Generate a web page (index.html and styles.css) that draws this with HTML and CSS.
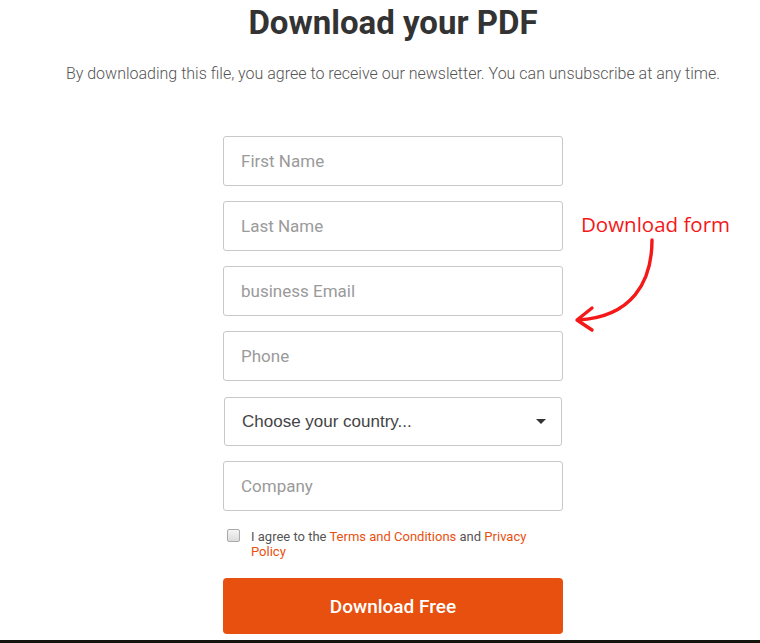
FILE: index.html
```html
<!DOCTYPE html>
<html>
<head>
<meta charset="utf-8"/>
<title>Download your PDF</title>
<link rel="stylesheet" href="styles.css">
</head>
<body>

<div class="page">
	<h1>Download your PDF</h1>
	<p class="lead">By downloading this file, you agree to receive our newsletter. You can unsubscribe at any time.</p>

	<form class="dlform">
		<input type="text" class="field" placeholder="First Name">
		<input type="text" class="field" placeholder="Last Name">
		<input type="text" class="field" placeholder="business Email">
		<input type="text" class="field" placeholder="Phone">
		<div class="selbox">
			<span>Choose your country...</span>
			<span class="caret"></span>
		</div>
		<input type="text" class="field" placeholder="Company">
		<label class="agree">
			<span class="chk"></span>
			<span class="agreetxt">I agree to the <a href="#">Terms and Conditions</a> and <a href="#">Privacy Policy</a></span>
		</label>
		<button type="button" class="dlbtn">Download Free</button>
	</form>

	<!-- annotation over the page -->
	<div class="note">
		<span>Download form</span>
		<svg width="100" height="110" viewBox="0 0 100 110">
			<path d="M80 8 C80 50 60 85 6 88" fill="none" stroke="#f41818" stroke-width="3.4" stroke-linecap="round"/>
			<path d="M20 76 L5 88 L20 98" fill="none" stroke="#f41818" stroke-width="3.4" stroke-linecap="round" stroke-linejoin="round"/>
		</svg>
	</div>
</div>
<div class="bottombar"></div>

</body>
</html>
```

FILE: styles.css
```css
body {
	margin: 0;
	background: #fff;
	font-family: Roboto, "Liberation Sans", sans-serif;
	color: #333;
}
.page {
	position: relative;
	height: 640px;
	padding-left: 26px;
	overflow: hidden;
}
h1 {
	margin: 0;
	padding-top: 3px;
	text-align: center;
	font-size: 33px;
	font-weight: 700;
	line-height: 40px;
	color: #333;
}
.lead {
	margin: 21px 0 0 0;
	text-align: center;
	font-size: 16px;
	font-weight: 300;
	color: #555;
	line-height: 20px;
}

/* form */
.dlform {
	width: 340px;
	margin: 52px auto 0 auto;
	display: flex;
	flex-direction: column;
	gap: 15px;
}
.field {
	box-sizing: border-box;
	height: 50px;
	width: 100%;
	margin: 0;
	padding: 0 17px;
	border: 1px solid #c8c8c8;
	border-radius: 3px;
	font-family: Roboto, sans-serif;
	font-size: 17px;
	color: #333;
	outline: none;
}
.field::placeholder {
	color: #9a9a9a;
}
.selbox {
	box-sizing: border-box;
	height: 49px;
	margin: 1px 1px 0 1px;
	padding: 0 15px 0 17px;
	border: 1px solid #c8c8c8;
	border-radius: 3px;
	display: flex;
	align-items: center;
	justify-content: space-between;
	font-family: "Liberation Sans", Arial, sans-serif;
	font-size: 17px;
	color: #444;
}
.caret {
	width: 0;
	height: 0;
	border-left: 5px solid transparent;
	border-right: 5px solid transparent;
	border-top: 5px solid #333;
}
.agree {
	display: flex;
	align-items: flex-start;
	gap: 11px;
	padding: 3px 30px 0 4px;
	font-size: 13px;
	line-height: 15px;
	color: #555;
}
.agreetxt {
	display: block;
}
.agree a {
	color: #e8500f;
	text-decoration: none;
}
.chk {
	flex: none;
	box-sizing: border-box;
	width: 13px;
	height: 13px;
	border: 1px solid #aaa;
	border-radius: 2px;
	background: linear-gradient(#f4f4f4, #dcdcdc);
}
.dlbtn {
	height: 56px;
	margin-top: 4px;
	border: none;
	border-radius: 4px;
	background: #e8500f;
	color: #fff;
	font-family: Roboto, sans-serif;
	font-size: 19px;
	font-weight: 500;
	cursor: pointer;
}

/* annotation */
.note {
	position: absolute;
	left: 572px;
	top: 212px;
	width: 180px;
}
.note span {
	display: block;
	padding-left: 9px;
	font-family: "Open Sans", sans-serif;
	font-size: 20.5px;
	line-height: 24px;
	color: #f41818;
}
.note svg {
	display: block;
	margin-top: -4px;
}
.bottombar {
	height: 3px;
	background: #14140c;
}
```
